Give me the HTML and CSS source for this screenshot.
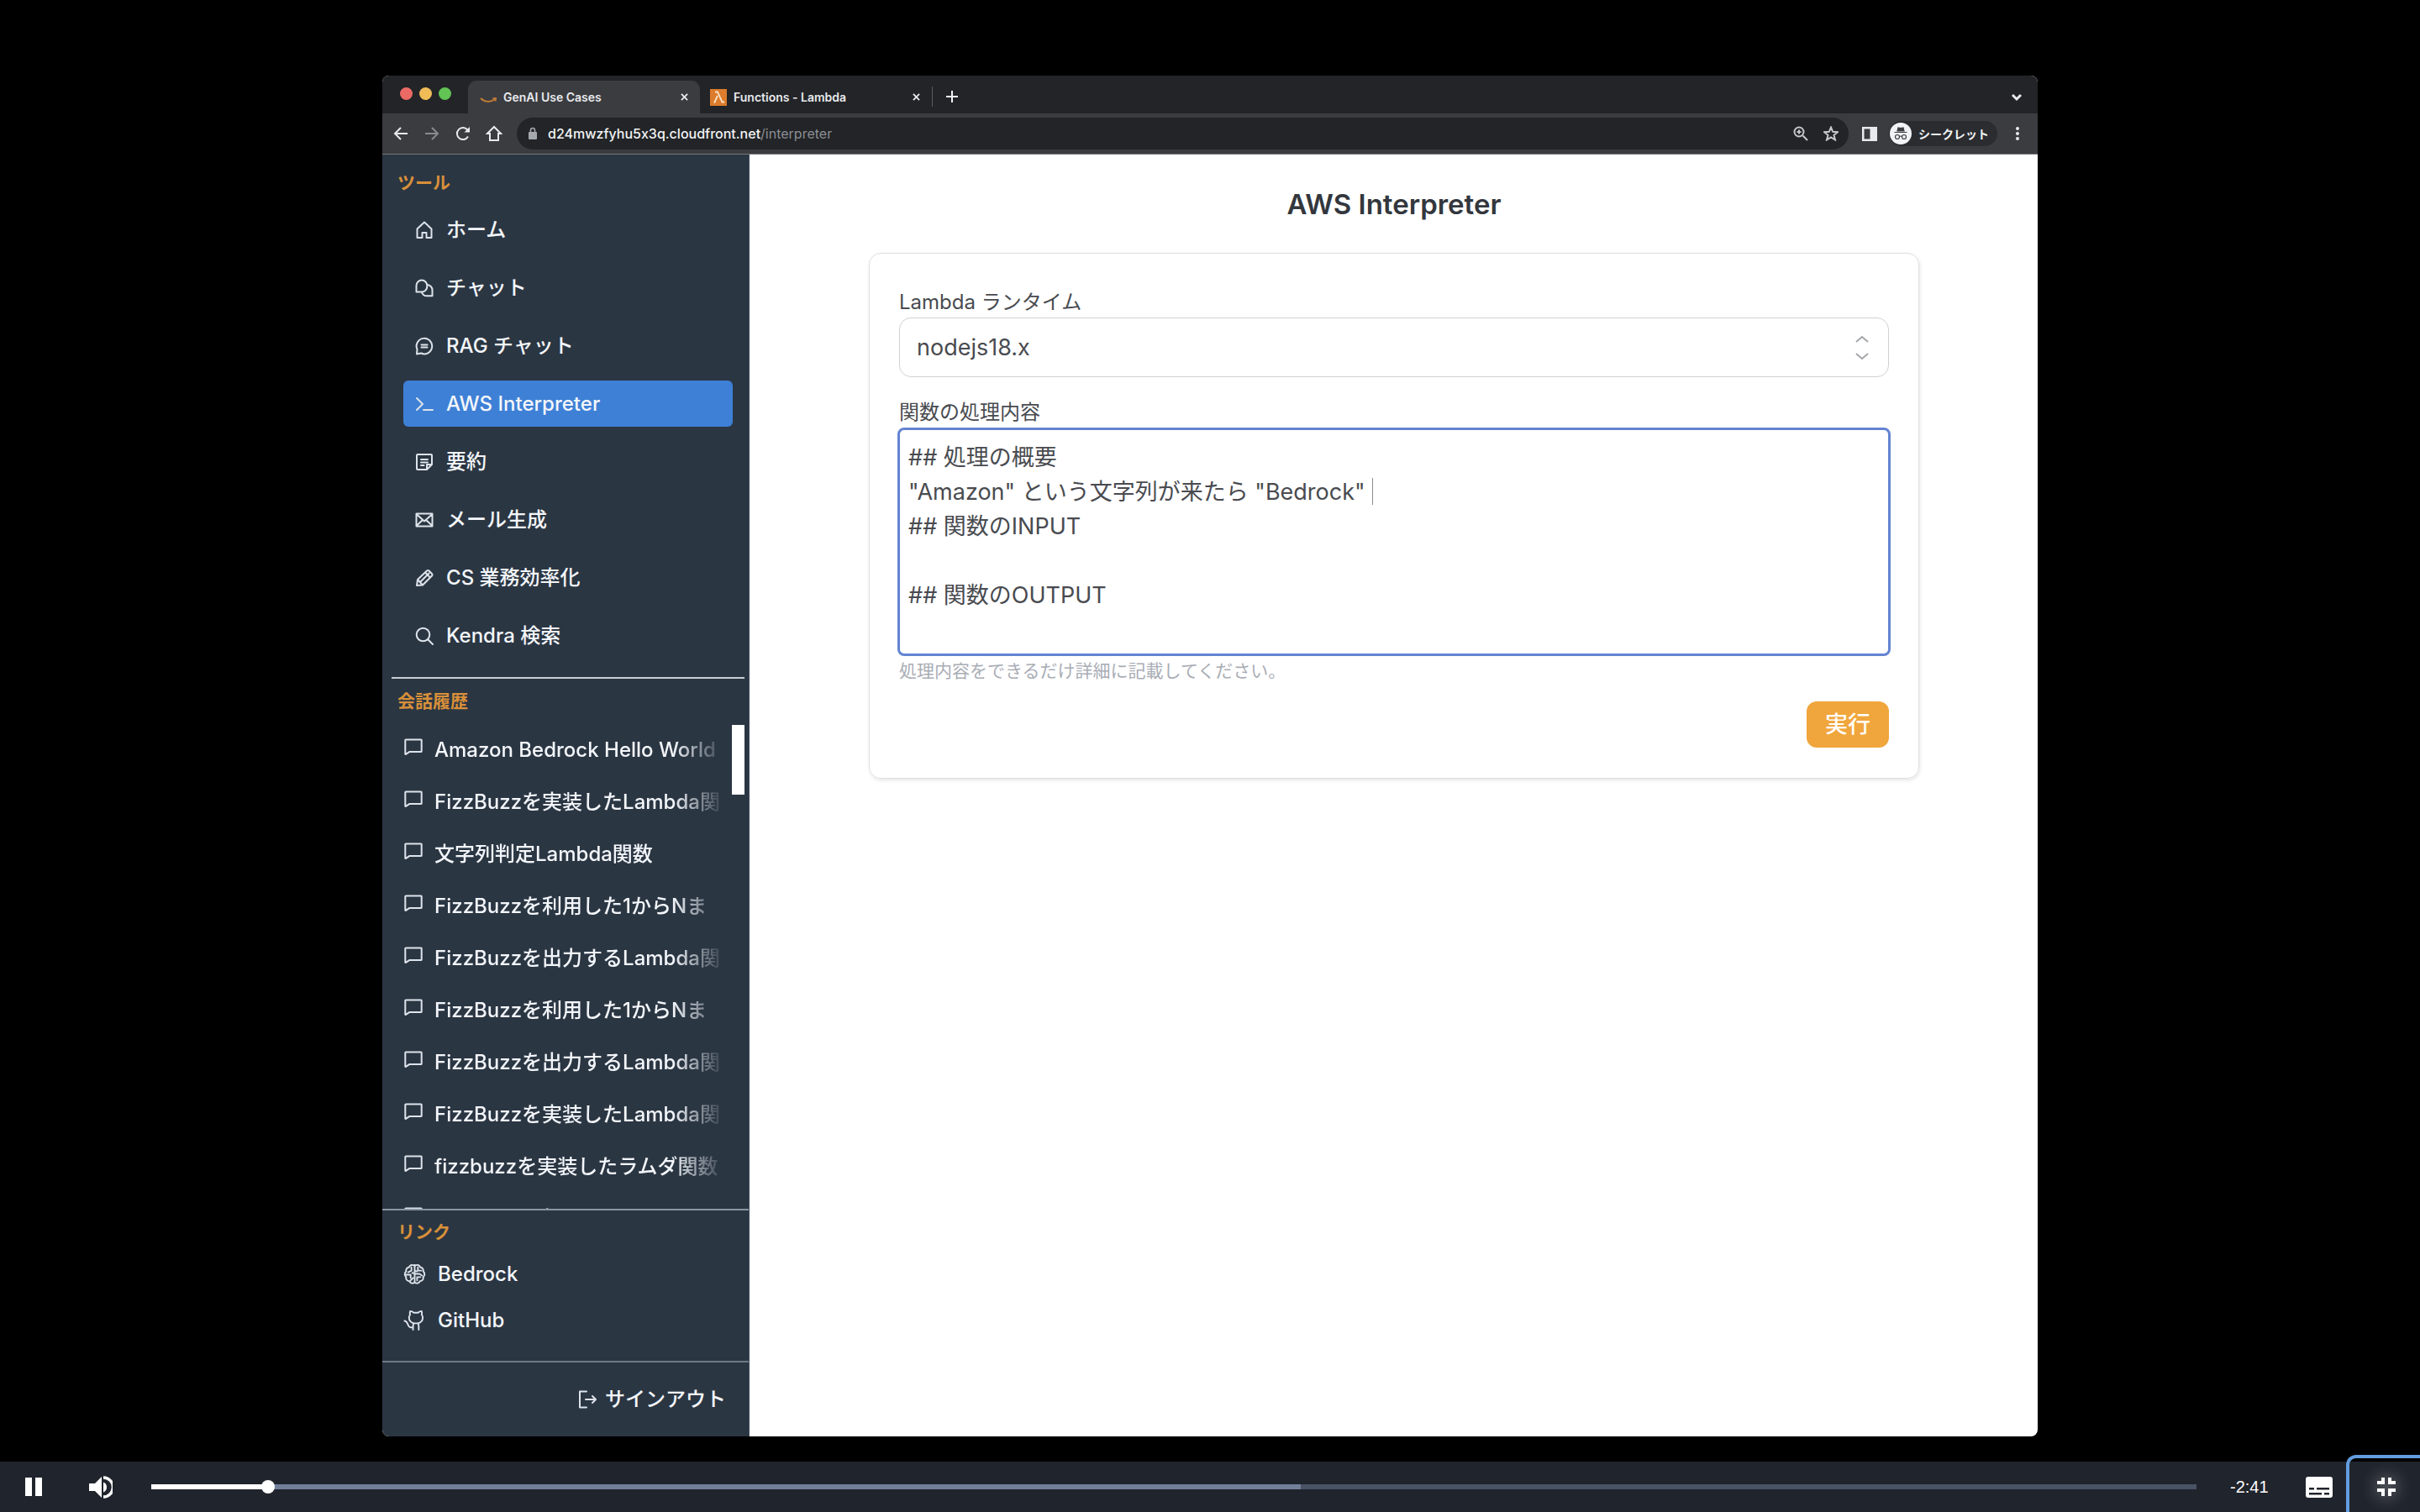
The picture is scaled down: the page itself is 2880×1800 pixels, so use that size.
FILE: index.html
```html
<!DOCTYPE html>
<html lang="ja">
<head>
    <meta charset="UTF-8">
    <meta name="viewport" content="width=device-width, initial-scale=1.0">
    <title>AWS Interpreter</title>

    <link rel="stylesheet" href="styles.css">
</head>

<body>

    <!-- Shared icons -->
    <svg class="icon-defs" aria-hidden="true">
        <symbol id="i-bubble" viewBox="0 0 22 20">
            <path d="M2 1.5h18a.7.7 0 0 1 .7.7v13a.7.7 0 0 1-.7.7H6.500l-4.500 3a.5.5 0 0 1-.7-.5V2.200a.7.7 0 0 1 .7-.7z"/>
        </symbol>
        <symbol id="i-close" viewBox="0 0 10 10">
            <path d="M1 1l8 8M9 1L1 9"/>
        </symbol>
    </svg>

    <!-- Recorded browser window -->
    <div class="stage">
        <div class="window">

            <div class="tabbar">
                <div class="lights">
                    <span class="light red"></span>
                    <span class="light yellow"></span>
                    <span class="light green"></span>
                </div>
                <div class="tab active">
                    <svg class="favicon" viewBox="0 0 20 20"><path d="M1 11c5 5 12 5 17 1M18.500 14.500l.5-3.500-3.500.3" fill="none" stroke="#c07a35" stroke-width="2"/></svg>
                    <span>GenAI Use Cases</span>
                    <button class="tab-close" aria-label="閉じる"><svg><use href="#i-close"/></svg></button>
                </div>
                <div class="tab">
                    <svg class="favicon" viewBox="0 0 20 20"><rect width="20" height="20" fill="#dd7c2c"/><path d="M6 3.500h3l5.500 12H17M9 8L5 16.500" fill="none" stroke="#fbe3c8" stroke-width="1.800"/></svg>
                    <span>Functions - Lambda</span>
                    <button class="tab-close" aria-label="閉じる"><svg><use href="#i-close"/></svg></button>
                </div>
                <button class="tab-new" aria-label="新しいタブ"><svg viewBox="0 0 16 16"><path d="M8 1v14M1 8h14"/></svg></button>
                <button class="tab-list" aria-label="タブを検索"><svg viewBox="0 0 14 10"><path d="M2 2l5 5 5-5"/></svg></button>
            </div>

            <div class="toolbar">
                <button class="tool" aria-label="戻る"><svg viewBox="0 0 20 20"><path d="M18 10H3M10 3l-7 7 7 7"/></svg></button>
                <button class="tool dim" aria-label="進む"><svg viewBox="0 0 20 20"><path d="M2 10h15M10 3l7 7-7 7"/></svg></button>
                <button class="tool" aria-label="再読み込み"><svg viewBox="0 0 20 20"><path d="M16 13.500a7 7 0 1 1-.8-8L17 7.500"/><path d="M18 2v6.500h-6.500z" fill="#e8eaed" stroke="none"/></svg></button>
                <button class="tool" aria-label="ホーム"><svg viewBox="0 0 20 20"><path d="M2 10l8-8 8 8h-3v8H5v-8z"/></svg></button>
                <div class="address">
                    <svg class="lock" viewBox="0 0 12 16"><rect x="1" y="6" width="10" height="9" rx="1" fill="#a5a8ad"/><path d="M3.500 6V4a2.500 2.500 0 0 1 5 0v2" fill="none" stroke="#a5a8ad" stroke-width="1.600"/></svg>
                    <span class="url"><b>d24mwzfyhu5x3q.cloudfront.net</b>/interpreter</span>
                    <svg class="address-icon" viewBox="0 0 18 18"><circle cx="7" cy="7" r="5.500"/><path d="M11.500 11.500L17 17M4.500 7h5M7 4.500v5"/></svg>
                    <svg class="address-icon" viewBox="0 0 18 18"><path d="M9 1.500l2.200 5.300 5.800.4-4.500 3.600 1.500 5.700L9 13.400l-5 3.100 1.500-5.700L1 7.200l5.800-.4z"/></svg>
                </div>
                <svg class="panel" viewBox="0 0 18 17"><path d="M0 0h18v17H0zM2.500 2.500v12h7v-12z" fill="#e8eaed" fill-rule="evenodd"/></svg>
                <div class="incognito">
                    <svg viewBox="0 0 26 26"><circle cx="13" cy="13" r="13" fill="#f1f3f4"/><path d="M9 10l1-4 3 .6L16 6l1 4zM5.500 11.500h15" fill="#3c4043" stroke="#3c4043" stroke-width="1.200"/><path d="M11.500 17a2.500 2.500 0 1 1-5 0 2.500 2.500 0 0 1 5 0zM19.500 17a2.500 2.500 0 1 1-5 0 2.500 2.500 0 0 1 5 0zM11.500 16.500q1.500-1 3 0" fill="none" stroke="#3c4043" stroke-width="1.200"/></svg>
                    <span>シークレット</span>
                </div>
                <svg class="dots" viewBox="0 0 4 16"><circle cx="2" cy="2" r="2"/><circle cx="2" cy="8" r="2"/><circle cx="2" cy="14" r="2"/></svg>
            </div>

            <div class="page">

                <!-- Sidebar -->
                <aside class="sidebar">
                    <h2 class="section-title">ツール</h2>
                    <nav class="nav">
                        <a href="#" class="nav-item"><svg viewBox="0 0 22 22"><path d="M2.500 20V9.500L11 1.500l8.500 8V20h-6v-6h-5v6z"/></svg>ホーム</a>
                        <a href="#" class="nav-item"><svg viewBox="0 0 22 22"><path d="M1.500 15.500V8a6.400 6.400 0 0 1 12.800 0v1a6.400 6.400 0 0 1-6.400 6.500z"/><path d="M14.500 7a6.300 6.300 0 0 1 6 6.300v7H14a6.300 6.300 0 0 1-6-4.300"/></svg>チャット</a>
                        <a href="#" class="nav-item"><svg viewBox="0 0 22 22"><path d="M2.500 15A9.300 9.300 0 1 1 7 19.500l-5 1z"/><path d="M7.500 9.500h7M7.500 12.500h7"/></svg>RAG チャット</a>
                        <a href="#" class="nav-item active"><svg viewBox="0 0 22 22"><path d="M2 4l7 7-7 7M10 18h11"/></svg>AWS Interpreter</a>
                        <a href="#" class="nav-item"><svg viewBox="0 0 22 22"><path d="M14 20H3a1 1 0 0 1-1-1V3a1 1 0 0 1 1-1h16a1 1 0 0 1 1 1v11zM14 20v-6h6M7 8h8M7 11.500h8M7 15h3.500"/></svg>要約</a>
                        <a href="#" class="nav-item"><svg viewBox="0 0 22 22"><path d="M1.500 3.500h19v15h-19zM1.500 4L11 12.500 20.500 4M1.500 18l7.500-7M20.500 18L13 11"/></svg>メール生成</a>
                        <a href="#" class="nav-item"><svg viewBox="0 0 22 22"><path d="M2 20l1-7L14 2.500a2 2 0 0 1 2.500 0L20 6a2 2 0 0 1 0 2.500L9 19.500zM3 13l6 6.500M6 16L16.500 5.500M12 4.500l6 6"/></svg>CS 業務効率化</a>
                        <a href="#" class="nav-item"><svg viewBox="0 0 22 22"><circle cx="9.500" cy="9.500" r="7.800"/><path d="M15 15l6 6"/></svg>Kendra 検索</a>
                    </nav>

                    <h2 class="section-title history-title">会話履歴</h2>
                    <div class="history">
                        <ul class="history-list">
                            <li><a href="#"><svg><use href="#i-bubble"/></svg><span>Amazon Bedrock Hello World</span></a></li>
                            <li><a href="#"><svg><use href="#i-bubble"/></svg><span>FizzBuzzを実装したLambda関</span></a></li>
                            <li><a href="#"><svg><use href="#i-bubble"/></svg><span>文字列判定Lambda関数</span></a></li>
                            <li><a href="#"><svg><use href="#i-bubble"/></svg><span>FizzBuzzを利用した1からNま</span></a></li>
                            <li><a href="#"><svg><use href="#i-bubble"/></svg><span>FizzBuzzを出力するLambda関</span></a></li>
                            <li><a href="#"><svg><use href="#i-bubble"/></svg><span>FizzBuzzを利用した1からNま</span></a></li>
                            <li><a href="#"><svg><use href="#i-bubble"/></svg><span>FizzBuzzを出力するLambda関</span></a></li>
                            <li><a href="#"><svg><use href="#i-bubble"/></svg><span>FizzBuzzを実装したLambda関</span></a></li>
                            <li><a href="#"><svg><use href="#i-bubble"/></svg><span>fizzbuzzを実装したラムダ関数</span></a></li>
                            <li><a href="#"><svg><use href="#i-bubble"/></svg><span>fizzbuzzを実装した</span></a></li>
                        </ul>
                        <div class="scrollbar"></div>
                    </div>

                    <div class="links">
                        <h2 class="section-title">リンク</h2>
                        <a href="#" class="link-item"><svg viewBox="0 0 28 28"><path d="M14 3v22M14 4.500a4 4 0 0 0-7 1.500 4 4 0 0 0-3.500 5 4.500 4.500 0 0 0 0 7 4 4 0 0 0 4 5 4 4 0 0 0 6.500 1.500M14 4.500a4 4 0 0 1 7 1.500 4 4 0 0 1 3.500 5 4.500 4.500 0 0 1 0 7 4 4 0 0 1-4 5 4 4 0 0 1-6.500 1.500M10 6v4l-4 2M3.500 15H9v4M9 22l3-3M11 13h3M18 6v4h4M14 14h6l3 2M17 22v-4h4M14 10l3 1"/></svg>Bedrock</a>
                        <a href="#" class="link-item"><svg viewBox="0 0 28 28"><path d="M8.500 3c2 0 3.500 1 4.500 2h5c1-1 2.500-2 4.500-2 .6 1.500.6 3 .2 4.500.8 1 1.300 2 1.300 3.500 0 4-3 7-7 7h-3c-4 0-7-3-7-7 0-1.500.5-2.500 1.300-3.500C7.900 6 7.900 4.500 8.500 3zM12 26v-4.500c0-2 1-3.500 2-3.500M19 26v-4.500c0-2-1-3.500-2-3.500M12 23H9c-4 0-3-8-7.500-8"/></svg>GitHub</a>
                    </div>

                    <div class="signout">
                        <button class="signout-btn"><svg viewBox="0 0 22 22"><path d="M10 1.500H2v19h8M9 11h12M17 7l4 4-4 4"/></svg>サインアウト</button>
                    </div>
                </aside>

                <!-- Main -->
                <main class="main">
                    <h1>AWS Interpreter</h1>
                    <form class="card">
                        <label for="runtime">Lambda ランタイム</label>
                        <div class="select-wrap">
                            <select id="runtime">
                                <option selected>nodejs18.x</option>
                            </select>
                            <svg class="select-arrow" viewBox="0 0 16 30"><path d="M1 8l7-6 7 6M1 22l7 6 7-6"/></svg>
                        </div>

                        <label for="content">関数の処理内容</label>
                        <div class="textarea-wrap">
                            <textarea id="content" rows="6" spellcheck="false">## 処理の概要
"Amazon" という文字列が来たら "Bedrock" 
## 関数のINPUT

## 関数のOUTPUT
</textarea>
                            <span class="caret"></span>
                        </div>
                        <p class="hint">処理内容をできるだけ詳細に記載してください。</p>
                        <button type="button" class="run">実行</button>
                    </form>
                </main>
            </div>
        </div>
    </div>

    <!-- Player controls -->
    <div class="controls">
        <button class="control pause" aria-label="一時停止"><svg viewBox="0 0 20 22"><path d="M0 0h8v22H0zM12 0h8v22h-8z"/></svg></button>
        <button class="control volume" aria-label="音量"><svg viewBox="0 0 28 27"><path d="M0 9h7l8-8v25l-8-8H0zM17 7.500a6.500 6.500 0 0 1 0 12z"/><path d="M17 2a11.500 11.500 0 0 1 0 23" fill="none" stroke="#fff" stroke-width="3.500"/></svg></button>
        <input class="seek" type="range" min="0" max="1000" value="54" aria-label="再生位置">
        <span class="time">-2:41</span>
        <button class="control captions" aria-label="字幕"><svg viewBox="0 0 32 25"><path fill-rule="evenodd" d="M3 0h26a3 3 0 0 1 3 3v19a3 3 0 0 1-3 3H3a3 3 0 0 1-3-3V3a3 3 0 0 1 3-3zM4 13v2.500h6V13zM13 13v2.500h15V13zM4 19v2.500h15V19zM22 19v2.500h6V19z"/></svg></button>
        <button class="control fullscreen" aria-label="全画面表示を終了"><svg viewBox="0 0 22 22"><path d="M5 0h4v8H0V4h5zM13 0h4v4h5v4h-9zM0 13h9v9H5v-5H0zM13 13h9v4h-5v5h-4z"/></svg></button>
    </div>

</body>
</html>
```
FILE: styles.css
```css
/* ===== General Styling ===== */
* {
    box-sizing: border-box;
}

body {
    margin: 0;
    background: #000;
    font-family: Inter, "Noto Sans CJK JP", sans-serif;
    font-feature-settings: "calt" 0;
    overflow: hidden;
}

button {
    padding: 0;
    border: none;
    background: none;
    color: inherit;
    font: inherit;
    cursor: pointer;
}

a {
    color: inherit;
    text-decoration: none;
}

svg {
    display: block;
    flex: none;
}

.icon-defs {
    position: absolute;
    width: 0;
    height: 0;
}

/* ===== Window ===== */
.stage {
    height: 100vh;
    padding: 5vh 15.8vw;
}

.window {
    height: 100%;
    display: flex;
    flex-direction: column;
    overflow: hidden;
    border-radius: 8px;
    background: #fff;
}

/* ===== Tabs ===== */
.tabbar {
    display: flex;
    flex: none;
    align-items: flex-end;
    height: 45px;
    background: #222427;
    color: #e8eaed;
    font-size: 14px;
    font-weight: 600;
}

.lights {
    display: flex;
    gap: 8px;
    width: 102px;
    padding: 0 0 16px 21px;
}

.light {
    width: 15px;
    height: 15px;
    border-radius: 50%;
}

.red { background: #ec6a66; }
.yellow { background: #f0bc57; }
.green { background: #61c454; }

.tab {
    display: flex;
    align-items: center;
    gap: 8px;
    width: 276px;
    height: 39px;
    padding: 0 14px;
    border-radius: 10px 10px 0 0;
}

.tab + .tab {
    padding: 0 14px 0 12px;
}

.tab.active {
    background: #3b3c40;
}

.favicon {
    width: 20px;
    height: 20px;
}

.tab-close {
    margin-left: auto;
}

.tab-close svg {
    width: 9px;
    height: 9px;
    fill: none;
    stroke: #e8eaed;
    stroke-width: 2;
}

.tab-new {
    height: 24px;
    margin-bottom: 8px;
    padding-left: 15px;
    border-left: 1px solid #5a5c60;
}

.tab-new svg {
    width: 16px;
    height: 16px;
    stroke: #f1f3f4;
    stroke-width: 2;
}

.tab-list {
    margin: 0 18px 14px auto;
}

.tab-list svg {
    width: 14px;
    height: 10px;
    fill: none;
    stroke: #e8eaed;
    stroke-width: 3;
}

/* ===== Address Bar ===== */
.toolbar {
    display: flex;
    flex: none;
    align-items: center;
    height: 49px;
    padding: 0 22px 0 12px;
    background: #3b3c40;
    border-bottom: 1px solid #77797c;
}

.tool {
    width: 20px;
    margin-right: 17px;
}

.tool svg {
    width: 20px;
    height: 20px;
    fill: none;
    stroke: #e8eaed;
    stroke-width: 2;
}

.tool.dim {
    opacity: 0.45;
}

.address {
    display: flex;
    flex: 1;
    align-items: center;
    gap: 18px;
    height: 38px;
    padding: 0 12px 0 13px;
    border-radius: 19px;
    background: #222427;
}

.lock {
    width: 12px;
    height: 16px;
}

.url {
    flex: 1;
    margin-left: -6px;
    color: #8b8e93;
    font-size: 16px;
}

.url b {
    color: #f1f3f4;
    font-weight: 500;
}

.address-icon {
    width: 18px;
    height: 18px;
    fill: none;
    stroke: #c4c7cb;
    stroke-width: 2;
}

.panel {
    width: 18px;
    height: 17px;
    margin: 0 14px 0 16px;
}

.incognito {
    display: flex;
    align-items: center;
    gap: 8px;
    width: 129px;
    height: 30px;
    padding-left: 1px;
    border-radius: 15px;
    background: #2a2c30;
    color: #f1f3f4;
    font-size: 14px;
    font-weight: 700;
}

.incognito svg {
    width: 26px;
    height: 26px;
}

.dots {
    width: 4px;
    height: 16px;
    margin-left: 22px;
    fill: #e8eaed;
}

/* ===== Sidebar ===== */
.page {
    display: flex;
    flex: 1;
    min-height: 0;
}

.sidebar {
    display: flex;
    flex: none;
    flex-direction: column;
    width: 437px;
    background: #2b3643;
    border-right: 1px solid #3f4b5c;
    color: #f3f6fa;
    font-size: 24px;
    line-height: 34px;
    font-weight: 500;
}

.sidebar svg {
    fill: none;
    stroke: #dde3ea;
    stroke-width: 2;
    stroke-linejoin: round;
    stroke-linecap: round;
}

.section-title {
    margin: 0;
    padding-left: 18px;
    color: #d8903a;
    font-size: 21px;
    line-height: 28px;
    font-weight: 600;
}

.sidebar > .section-title {
    margin-top: 20px;
}

.nav {
    display: flex;
    flex-direction: column;
    gap: 14px;
    margin: 14px 5px 0 11px;
    padding: 0 14px 22px 14px;
    border-bottom: 2px solid #c9ced4;
}

.nav-item {
    display: flex;
    align-items: center;
    gap: 15px;
    height: 55px;
    padding: 0 14px;
    border-radius: 6px;
}

.nav-item.active {
    background: #3e80d6;
}

.nav-item svg {
    width: 22px;
    height: 22px;
}

.sidebar > .history-title {
    margin-top: 13px;
}

.history {
    display: flex;
    flex: 1;
    min-height: 0;
    margin-top: 14px;
    padding-right: 5px;
}

.history-list {
    flex: 1;
    min-width: 0;
    margin: 0;
    padding: 0 8px 0 26px;
    overflow: hidden;
    list-style: none;
}

.history-list a {
    display: flex;
    align-items: center;
    gap: 14px;
    height: 62px;
    padding-bottom: 2px;
}

.history-list svg {
    width: 22px;
    height: 20px;
    margin-bottom: 8px;
}

.history-list span {
    flex: 1;
    overflow: hidden;
    white-space: nowrap;
    -webkit-mask-image: linear-gradient(to right, #000 82%, transparent);
    mask-image: linear-gradient(to right, #000 82%, transparent);
}

.scrollbar {
    width: 15px;
    height: 83px;
    background: #fff;
}

.links {
    height: 181px;
    padding-top: 12px;
    border-top: 2px solid #8b96a3;
}

.link-item {
    display: flex;
    align-items: center;
    gap: 14px;
    height: 55px;
    padding-left: 25px;
}

.links .section-title {
    margin-bottom: 8px;
}

.link-item svg {
    width: 27px;
    height: 27px;
}

.signout {
    display: flex;
    align-items: center;
    justify-content: flex-end;
    height: 90px;
    padding-right: 27px;
    border-top: 2px solid #6d7986;
}

.signout-btn {
    display: flex;
    align-items: center;
    gap: 10px;
}

.signout-btn svg {
    width: 22px;
    height: 22px;
}

/* ===== Main ===== */
.main {
    flex: 1;
    padding: 37px 141px 0 142px;
    color: #494b50;
}

h1 {
    margin: 0 0 36px;
    color: #33373d;
    font-size: 33px;
    line-height: 44px;
    font-weight: 600;
    text-align: center;
}

.card {
    display: flex;
    flex-direction: column;
    padding: 40px 35px 36px;
    border: 1px solid #dfe0e2;
    border-radius: 14px;
    box-shadow: 1px 2px 4px rgba(0, 0, 0, 0.1);
}

label {
    font-size: 24px;
    line-height: 36px;
}

.select-wrap {
    position: relative;
    margin-bottom: 24px;
}

select {
    display: block;
    width: 100%;
    height: 71px;
    padding: 0 20px;
    appearance: none;
    border: 1px solid #cfd1d4;
    border-radius: 14px;
    background: #fff;
    color: #494b50;
    font-family: inherit;
    font-size: 27px;
}

.select-arrow {
    position: absolute;
    top: 21px;
    right: 24px;
    width: 16px;
    height: 30px;
    fill: none;
    stroke: #a4a6aa;
    stroke-width: 2;
    pointer-events: none;
}

.textarea-wrap {
    position: relative;
    margin: 0 -2px 4px;
}

textarea {
    display: block;
    width: 100%;
    height: 272px;
    padding: 12px 10px;
    border: 3px solid #6484d2;
    border-radius: 8px;
    outline: none;
    resize: none;
    overflow: hidden;
    background: #fff;
    color: #494b50;
    font-family: inherit;
    font-size: 27px;
    line-height: 41px;
}

/* Text cursor at the end of the second line */
.caret {
    position: absolute;
    top: 60px;
    left: 565px;
    width: 1px;
    height: 32px;
    background: #8a8c90;
}

.hint {
    margin: 0 0 22px;
    color: #a9adb5;
    font-size: 21px;
    line-height: 28px;
}

.run {
    align-self: flex-end;
    width: 98px;
    height: 55px;
    border-radius: 12px;
    background: #f0a63c;
    color: #fff;
    font-size: 27px;
    line-height: 40px;
    font-weight: 500;
}

/* ===== Player Controls ===== */
.controls {
    position: fixed;
    right: 0;
    bottom: 0;
    left: 0;
    display: flex;
    align-items: center;
    height: 60px;
    background: #20242c;
    color: #fff;
}

.control {
    display: flex;
    align-items: center;
    justify-content: center;
    width: 80px;
    height: 60px;
}

.control svg {
    fill: #fff;
}

.pause svg {
    width: 20px;
    height: 22px;
}

.volume svg {
    width: 28px;
    height: 27px;
}

.seek {
    flex: 1;
    min-width: 0;
    height: 6px;
    margin: 0 40px 0 20px;
    appearance: none;
    background: linear-gradient(to right, #fff 5.7%, #717f99 5.7% 56.2%, #4a5365 56.2%);
}

.seek::-webkit-slider-thumb {
    appearance: none;
    width: 16px;
    height: 16px;
    border-radius: 50%;
    background: #fff;
}

.time {
    width: 46px;
    font-family: "Liberation Sans", Arial, sans-serif;
    font-size: 20px;
}

.captions {
    width: 64px;
    margin-left: 28px;
}

.captions svg {
    width: 32px;
    height: 25px;
}

.fullscreen {
    align-self: flex-end;
    width: 88px;
    height: 68px;
    padding: 4px 0 0 4px;
    border: 4px solid #639de0;
    border-width: 4px 0 0 4px;
    border-radius: 12px 0 0 0;
}

.fullscreen svg {
    width: 22px;
    height: 22px;
    filter: drop-shadow(0 0 10px rgba(255, 255, 255, 0.7));
}
```
